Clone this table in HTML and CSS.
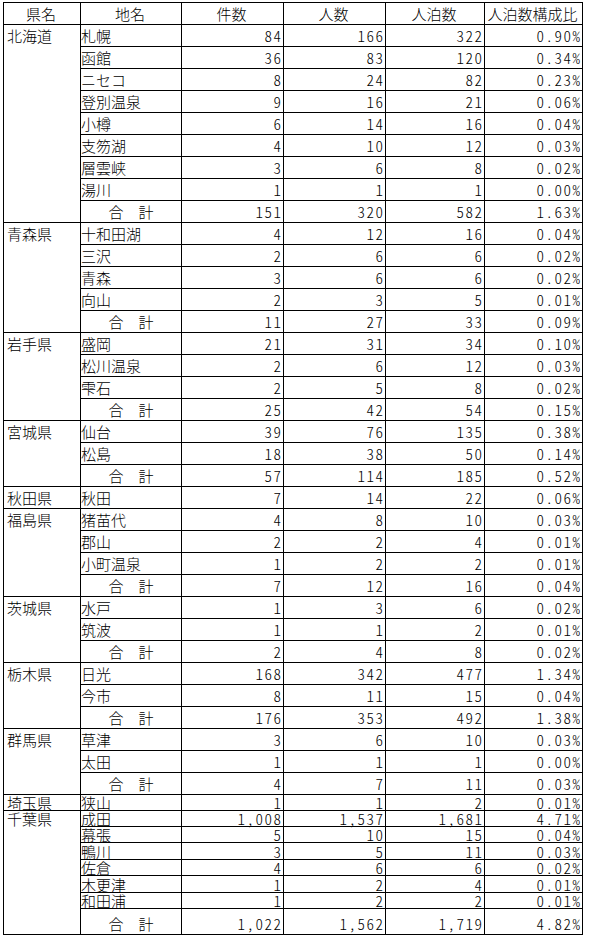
FILE: index.html
```html
<!DOCTYPE html>
<html lang="ja">
<head>
<meta charset="utf-8">
<title>県別宿泊実績</title>
<link rel="stylesheet" href="styles.css">
</head>
<body>
<table class="grid">
  <colgroup>
    <col class="c-pref"><col class="c-place"><col class="c-num"><col class="c-num"><col class="c-num2"><col class="c-ratio">
  </colgroup>
  <thead>
    <tr><th>県名</th><th>地名</th><th>件数</th><th>人数</th><th>人泊数</th><th>人泊数構成比</th></tr>
  </thead>
  <tbody>
    <tr><td class="pref" rowspan="9">北海道</td><td class="place">札幌</td><td class="n">84</td><td class="n">166</td><td class="n">322</td><td class="n">0.90%</td></tr>
    <tr><td class="place">函館</td><td class="n">36</td><td class="n">83</td><td class="n">120</td><td class="n">0.34%</td></tr>
    <tr><td class="place">ニセコ</td><td class="n">8</td><td class="n">24</td><td class="n">82</td><td class="n">0.23%</td></tr>
    <tr><td class="place">登別温泉</td><td class="n">9</td><td class="n">16</td><td class="n">21</td><td class="n">0.06%</td></tr>
    <tr><td class="place">小樽</td><td class="n">6</td><td class="n">14</td><td class="n">16</td><td class="n">0.04%</td></tr>
    <tr><td class="place">支笏湖</td><td class="n">4</td><td class="n">10</td><td class="n">12</td><td class="n">0.03%</td></tr>
    <tr><td class="place">層雲峡</td><td class="n">3</td><td class="n">6</td><td class="n">8</td><td class="n">0.02%</td></tr>
    <tr><td class="place">湯川</td><td class="n">1</td><td class="n">1</td><td class="n">1</td><td class="n">0.00%</td></tr>
    <tr><td class="sum">合　計</td><td class="n">151</td><td class="n">320</td><td class="n">582</td><td class="n">1.63%</td></tr>

    <tr><td class="pref" rowspan="5">青森県</td><td class="place">十和田湖</td><td class="n">4</td><td class="n">12</td><td class="n">16</td><td class="n">0.04%</td></tr>
    <tr><td class="place">三沢</td><td class="n">2</td><td class="n">6</td><td class="n">6</td><td class="n">0.02%</td></tr>
    <tr><td class="place">青森</td><td class="n">3</td><td class="n">6</td><td class="n">6</td><td class="n">0.02%</td></tr>
    <tr><td class="place">向山</td><td class="n">2</td><td class="n">3</td><td class="n">5</td><td class="n">0.01%</td></tr>
    <tr><td class="sum">合　計</td><td class="n">11</td><td class="n">27</td><td class="n">33</td><td class="n">0.09%</td></tr>

    <tr><td class="pref" rowspan="4">岩手県</td><td class="place">盛岡</td><td class="n">21</td><td class="n">31</td><td class="n">34</td><td class="n">0.10%</td></tr>
    <tr><td class="place">松川温泉</td><td class="n">2</td><td class="n">6</td><td class="n">12</td><td class="n">0.03%</td></tr>
    <tr><td class="place">雫石</td><td class="n">2</td><td class="n">5</td><td class="n">8</td><td class="n">0.02%</td></tr>
    <tr><td class="sum">合　計</td><td class="n">25</td><td class="n">42</td><td class="n">54</td><td class="n">0.15%</td></tr>

    <tr><td class="pref" rowspan="3">宮城県</td><td class="place">仙台</td><td class="n">39</td><td class="n">76</td><td class="n">135</td><td class="n">0.38%</td></tr>
    <tr><td class="place">松島</td><td class="n">18</td><td class="n">38</td><td class="n">50</td><td class="n">0.14%</td></tr>
    <tr><td class="sum">合　計</td><td class="n">57</td><td class="n">114</td><td class="n">185</td><td class="n">0.52%</td></tr>

    <tr><td class="pref">秋田県</td><td class="place">秋田</td><td class="n">7</td><td class="n">14</td><td class="n">22</td><td class="n">0.06%</td></tr>

    <tr><td class="pref" rowspan="4">福島県</td><td class="place">猪苗代</td><td class="n">4</td><td class="n">8</td><td class="n">10</td><td class="n">0.03%</td></tr>
    <tr><td class="place">郡山</td><td class="n">2</td><td class="n">2</td><td class="n">4</td><td class="n">0.01%</td></tr>
    <tr><td class="place">小町温泉</td><td class="n">1</td><td class="n">2</td><td class="n">2</td><td class="n">0.01%</td></tr>
    <tr><td class="sum">合　計</td><td class="n">7</td><td class="n">12</td><td class="n">16</td><td class="n">0.04%</td></tr>

    <tr><td class="pref" rowspan="3">茨城県</td><td class="place">水戸</td><td class="n">1</td><td class="n">3</td><td class="n">6</td><td class="n">0.02%</td></tr>
    <tr><td class="place">筑波</td><td class="n">1</td><td class="n">1</td><td class="n">2</td><td class="n">0.01%</td></tr>
    <tr><td class="sum">合　計</td><td class="n">2</td><td class="n">4</td><td class="n">8</td><td class="n">0.02%</td></tr>

    <tr><td class="pref" rowspan="3">栃木県</td><td class="place">日光</td><td class="n">168</td><td class="n">342</td><td class="n">477</td><td class="n">1.34%</td></tr>
    <tr><td class="place">今市</td><td class="n">8</td><td class="n">11</td><td class="n">15</td><td class="n">0.04%</td></tr>
    <tr><td class="sum">合　計</td><td class="n">176</td><td class="n">353</td><td class="n">492</td><td class="n">1.38%</td></tr>

    <tr><td class="pref" rowspan="3">群馬県</td><td class="place">草津</td><td class="n">3</td><td class="n">6</td><td class="n">10</td><td class="n">0.03%</td></tr>
    <tr><td class="place">太田</td><td class="n">1</td><td class="n">1</td><td class="n">1</td><td class="n">0.00%</td></tr>
    <tr><td class="sum">合　計</td><td class="n">4</td><td class="n">7</td><td class="n">11</td><td class="n">0.03%</td></tr>

    <tr class="short"><td class="pref"><span class="ul">埼玉県</span></td><td class="place">狭山</td><td class="n">1</td><td class="n">1</td><td class="n">2</td><td class="n">0.01%</td></tr>

    <tr class="short"><td class="pref" rowspan="7">千葉県</td><td class="place">成田</td><td class="n">1,008</td><td class="n">1,537</td><td class="n">1,681</td><td class="n">4.71%</td></tr>
    <tr class="short"><td class="place">幕張</td><td class="n">5</td><td class="n">10</td><td class="n">15</td><td class="n">0.04%</td></tr>
    <tr class="short tall1"><td class="place">鴨川</td><td class="n">3</td><td class="n">5</td><td class="n">11</td><td class="n">0.03%</td></tr>
    <tr class="short"><td class="place">佐倉</td><td class="n">4</td><td class="n">6</td><td class="n">6</td><td class="n">0.02%</td></tr>
    <tr class="short tall1"><td class="place">木更津</td><td class="n">1</td><td class="n">2</td><td class="n">4</td><td class="n">0.01%</td></tr>
    <tr class="short"><td class="place">和田浦</td><td class="n">1</td><td class="n">2</td><td class="n">2</td><td class="n">0.01%</td></tr>
    <tr class="last"><td class="sum">合　計</td><td class="n">1,022</td><td class="n">1,562</td><td class="n">1,719</td><td class="n">4.82%</td></tr>
  </tbody>
</table>
</body>
</html>
```

FILE: styles.css
```css
html, body {
  background: #fff;
}

body {
  margin: 2px 0 0 3px;
  color: #000;
  font-family: "Noto Sans CJK JP", "Noto Sans CJK SC", sans-serif;
  font-size: 15px;
  font-weight: 300;
}

.grid {
  border-collapse: separate;
  border-spacing: 0;
  table-layout: fixed;
  width: 580px;
  border-top: 1px solid #000;
  border-left: 1px solid #000;
}

.c-pref { width: 77px; }
.c-place { width: 101px; }
.c-num { width: 102px; }
.c-num2 { width: 99px; }
.c-ratio { width: 98px; }

.grid th,
.grid td {
  box-sizing: border-box;
  height: 22px;
  padding: 0 3px 0 1px;
  border-right: 1px solid #000;
  border-bottom: 1px solid #000;
  line-height: 20px;
  vertical-align: bottom;
  white-space: nowrap;
  font-weight: 300;
}

.grid th {
  text-align: center;
}

.grid td.pref {
  vertical-align: top;
  padding-left: 3px;
  padding-top: 1px;
}

.grid td.place {
  padding-left: 0;
  text-align: left;
}

.grid td.sum {
  text-align: center;
  padding: 0;
}

.grid td.n {
  text-align: right;
  padding-right: 0.5px;
  letter-spacing: 1.5px;
  font-feature-settings: "hwid" 1;
}

.grid tr.short td {
  height: 16px;
  line-height: 15px;
}

.grid tr.short td.pref {
  padding-top: 0;
}

.grid tr.tall1 td {
  height: 17px;
}

.grid tr.last td {
  height: 26px;
}

.ul {
  text-decoration: underline;
  text-underline-offset: 1px;
}
```
